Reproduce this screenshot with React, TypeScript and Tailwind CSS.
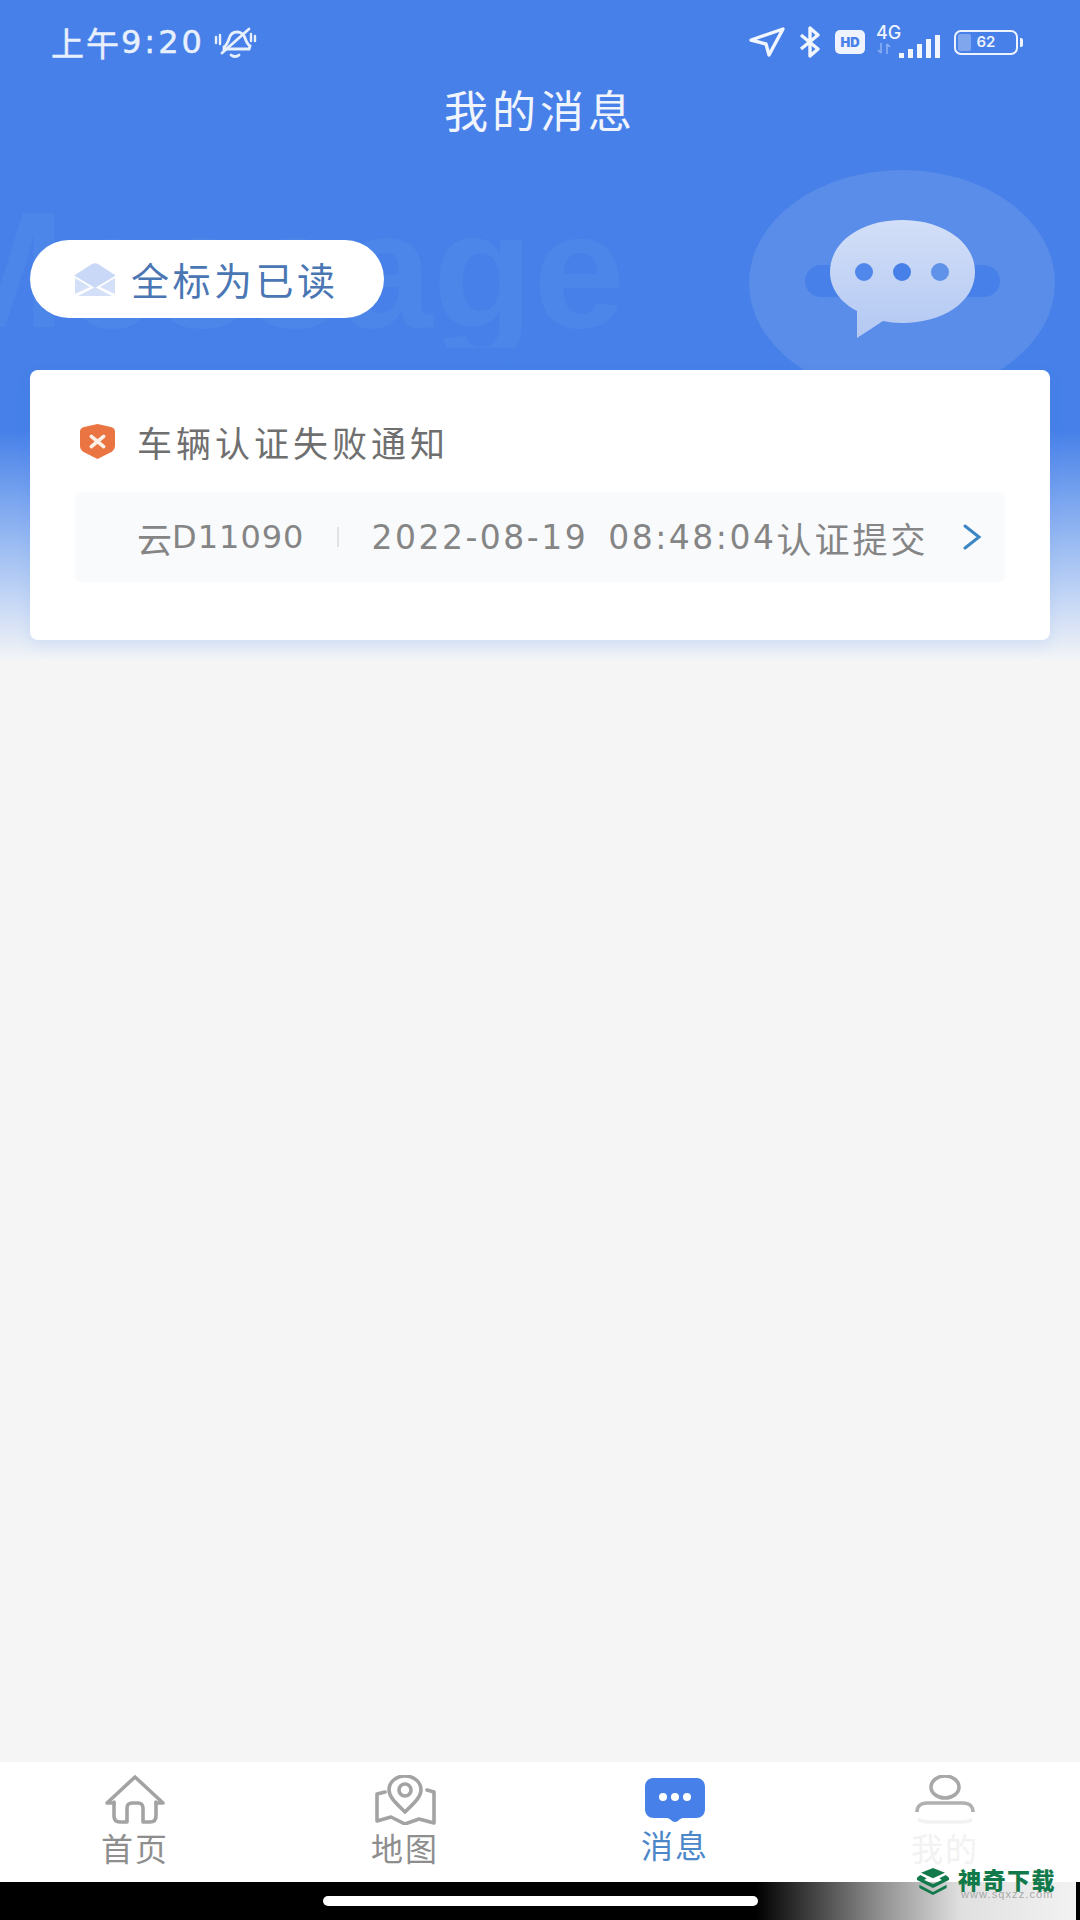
const cjk = "font-['Noto_Sans_CJK_SC','Noto_Sans',sans-serif]";
const latin = "font-['DejaVu_Sans','Noto_Sans_CJK_SC',sans-serif]";
const inter = "font-['Inter','Noto_Sans_CJK_SC',sans-serif]";

function MutedBell() {
  return (
    <svg width="44" height="32" viewBox="0 0 44 32" fill="none" stroke="#e8f0fd" strokeWidth="2.800" strokeLinecap="round">
      <path d="M11 21c3-2 4-5 5-8 1-4 4-7 8-7s7 3 8 6c1 3 2 6 5 8l-1 3H11z" />
      <path d="M9 27 36 3" />
      <path d="M18 29c2 2 6 2 8 0" fill="#e8f0fd" />
      <path d="M3 11v6M7 9v9M38 8v7M42 10v5" strokeWidth="2.400" />
    </svg>
  );
}

function StatusIcons() {
  return (
    <div className="flex items-center">
      <svg width="36" height="32" viewBox="0 0 36 32" fill="none" stroke="#f1f5fe" strokeWidth="3.400" strokeLinejoin="round">
        <path d="M2 14 34 3 20 29l-3-11z" />
      </svg>
      <svg className="ml-[13px]" width="24" height="32" viewBox="0 0 24 32" fill="none" stroke="#f1f5fe" strokeWidth="3.400" strokeLinejoin="round">
        <path d="M3 9 20 23l-8 7V2l8 7L3 23" />
      </svg>
      <div className={`ml-[13px] flex h-[24px] w-[30px] items-center justify-center rounded-[5px] bg-[#eef3fd] text-[13px] font-black leading-none text-[#4680e8] ${inter}`}>
        HD
      </div>
      <div className="relative ml-[11px] h-[30px] w-[64px]">
        <span className={`absolute left-0 top-[-4px] text-[18px] font-medium leading-[20px] text-[#eef3fd] ${inter}`}>4G</span>
        <svg className="absolute left-0 top-[15px]" width="16" height="13" viewBox="0 0 16 13" stroke="#8fb2f2" strokeWidth="1.500" fill="none">
          <path d="M5 1v10M2 8l3 3M11 12V2M14 5l-3-3" />
        </svg>
        <div className="absolute bottom-[-1px] right-0 flex items-end gap-[4px]">
          <div className="h-[5px] w-[5px] bg-[#f1f5fe]" />
          <div className="h-[9px] w-[5px] bg-[#f1f5fe]" />
          <div className="h-[14px] w-[5px] bg-[#f1f5fe]" />
          <div className="h-[19px] w-[5px] bg-[#f1f5fe]" />
          <div className="h-[23px] w-[5px] bg-[#f1f5fe]" />
        </div>
      </div>
      <div className="ml-[14px] flex items-center">
        <div className="relative flex h-[25px] w-[64px] items-center overflow-hidden rounded-[7px] border-[2.500px] border-[#eef3fd] p-[2px]">
          <div className="h-full w-[13px] rounded-[2px] bg-[#80a6ee]" />
          <span className={`absolute inset-0 text-center text-[15px] font-semibold leading-[20px] text-[#eef3fd] ${inter}`}>62</span>
        </div>
        <div className="ml-[2px] h-[9px] w-[3px] rounded-r-[2px] bg-[#eef3fd]" />
      </div>
    </div>
  );
}

function ChatDecor() {
  return (
    <div className="absolute left-[749px] top-[169px] h-[201px] w-[306px] overflow-hidden">
      <svg width="306" height="201" viewBox="0 0 306 201">
        <defs>
          <linearGradient id="bubble" x1="0" y1="0" x2="0" y2="1">
            <stop offset="0" stopColor="#d3dff8" />
            <stop offset="1" stopColor="#b3c8f2" />
          </linearGradient>
        </defs>
        <ellipse cx="153" cy="114" rx="153" ry="113" fill="#5a8de9" />
        <rect x="56" y="96" width="195" height="32" rx="16" fill="#4680e8" />
        <path d="M153 51c41 0 73 22 73 52 0 30-32 51-73 51-7 0-13-1-19-2l-26 17v-27c-17-9-27-23-27-39 0-30 31-52 72-52z" fill="url(#bubble)" />
        <circle cx="115" cy="103" r="9" fill="#4f88ea" />
        <circle cx="153" cy="103" r="9" fill="#4680e8" />
        <circle cx="191" cy="103" r="9" fill="#5f92e9" />
      </svg>
    </div>
  );
}

function Envelope() {
  return (
    <svg width="40" height="33" viewBox="0 0 40 33">
      <path d="M0 12 17 1c2-1 4-1 6 0l17 11v1L20 25 0 13z" fill="#c8d8f6" />
      <path d="M0 15l15 9L0 31zM40 15l-15 9 15 7zM3 33l17-9 17 9z" fill="#d3e0f8" />
    </svg>
  );
}

function ShieldX() {
  return (
    <svg width="35" height="35" viewBox="0 0 34 34">
      <path d="M17 0l13 3c2 .4 4 2 4 4v14c0 3-1 4-3 6L17 34 3 27c-2-2-3-3-3-6V7c0-2 2-3.600 4-4z" fill="#ea7543" />
      <path d="M11 12l12 10M23 12 11 22" stroke="#fdf0e8" strokeWidth="3.500" strokeLinecap="round" />
    </svg>
  );
}

function Tab(props: { label: string; color: string; children: React.ReactNode }) {
  return (
    <div className="flex w-[270px] flex-col items-center">
      <div className="flex h-[50px] items-center justify-center">{props.children}</div>
      <span className={`mt-[4px] text-[32px] leading-[36px] tracking-[2px] ${props.color} ${cjk}`}>{props.label}</span>
    </div>
  );
}

function BottomNav() {
  return (
    <div className="absolute bottom-[38px] left-0 flex h-[120px] w-full justify-center bg-white pt-[13px]">
      <Tab label="首页" color="text-[#8e8e8e]">
        <svg width="60" height="50" viewBox="0 0 60 50" fill="none" stroke="#a3a3a3" strokeWidth="3.600" strokeLinejoin="round" strokeLinecap="round">
          <path d="M9 28H2L30 2l28 26h-7" />
          <path d="M9 27v14c0 4 2 6 6 6h7V33c0-3 2-5 5-5h6c3 0 5 2 5 5v14h7c4 0 6-2 6-6V27" />
        </svg>
      </Tab>
      <Tab label="地图" color="text-[#8e8e8e]">
        <svg width="62" height="50" viewBox="0 0 62 50" fill="none" stroke="#a3a3a3" strokeWidth="3.600" strokeLinejoin="round" strokeLinecap="round">
          <path d="M31 37C22 28 15 22 15 15 15 7 22 1 31 1s16 6 16 14c0 7-7 13-16 22z" />
          <circle cx="31" cy="15" r="6" />
          <path d="M11 17 3 19v27l14-4 14 7 14-5 15 4V17l-7-2" />
        </svg>
      </Tab>
      <Tab label="消息" color="text-[#4c88c9] -translate-y-[3px]">
        <svg width="60" height="44" viewBox="0 0 60 44">
          <path d="M9 0h42c5 0 9 3 9 9v22c0 6-4 9-9 9H38c-3 0-5 4-8 4s-5-4-8-4H9c-5 0-9-3-9-9V9c0-6 4-9 9-9z" fill="#4680e8" />
          <circle cx="18" cy="19" r="4" fill="#fff" />
          <circle cx="30" cy="19" r="4" fill="#fff" />
          <circle cx="42" cy="19" r="4" fill="#fff" />
        </svg>
      </Tab>
      <Tab label="我的" color="text-[#f2f2f2]">
        <svg width="60" height="50" viewBox="0 0 60 50" fill="none" strokeWidth="3.600">
          <ellipse cx="30" cy="12" rx="14" ry="11" stroke="#a8a8a8" />
          <path d="M2 37c0-6 4-9 10-9h36c6 0 10 3 10 9" stroke="#b0b0b0" />
          <path d="M3 44c4 3 8 3 11 3h32c3 0 8 0 11-3" stroke="#f2f2f2" />
        </svg>
      </Tab>
    </div>
  );
}

function Watermark() {
  return (
    <div className="absolute bottom-0 right-0 h-[80px] w-[200px]">
      <svg className="absolute left-[37px] top-[27px]" width="32" height="29" viewBox="0 0 40 34">
        <path d="M20 0l15 6-15 7L5 6z" fill="#127a4a" />
        <path d="M4 9l8 4-3 2 11 5 11-5-3-2 8-4 6 5-22 11L-2 14z" fill="#127a4a" />
        <path d="M3 21l17 9 17-9v4L20 34 3 25z" fill="#127a4a" />
      </svg>
      <span className="absolute left-[78px] top-[24px] whitespace-nowrap text-[23px] font-black leading-[30px] tracking-[1.500px] text-[#127a4a] font-['Noto_Sans_CJK_SC',sans-serif]">神奇下载</span>
      <span className="absolute left-[81px] top-[49px] whitespace-nowrap text-[11px] leading-[11px] tracking-[1.100px] text-[#a8a8a8] font-['Liberation_Sans',sans-serif]">www.sqxzz.com</span>
    </div>
  );
}

export default function App() {
  return (
    <div className="relative h-[1920px] w-[1080px] overflow-hidden bg-[#f5f5f5]">
      <div className="absolute left-0 top-0 h-[662px] w-full bg-gradient-to-b from-[#4680e8] from-[65%] to-[#f4f5f6]" />
      <div className="absolute left-0 top-[188px] h-[160px] w-[640px] overflow-hidden">
        <span className="absolute left-[-72px] top-[-23px] whitespace-nowrap text-[165px] font-bold leading-[210px] text-[#4d86e9] font-['Liberation_Sans',sans-serif]">
          Message
        </span>
      </div>
      <ChatDecor />

      <div className="relative flex flex-col">
        <div className="flex h-[84px] items-center justify-between pl-[51px] pr-[57px]">
          <div className="flex items-center">
            <span className={`text-[33px] leading-none tracking-[2px] text-[#e8f0fd] [-webkit-text-stroke:0.5px_#e8f0fd] ${cjk}`}>上午</span>
            <span className={`text-[32px] leading-none tracking-[3px] text-[#e8f0fd] [-webkit-text-stroke:0.5px_#e8f0fd] ${latin}`}>9:20</span>
            <div className="ml-[8px]"><MutedBell /></div>
          </div>
          <StatusIcons />
        </div>
        <div className={`text-center text-[44px] leading-[50px] tracking-[4px] text-[#f0f4fd] ${cjk}`}>我的消息</div>

        <div className="ml-[30px] mt-[106px] flex h-[78px] w-[354px] items-center rounded-full bg-white pl-[45px]">
          <Envelope />
          <span className={`ml-[16px] whitespace-nowrap text-[38px] leading-none tracking-[3.500px] text-[#4a77b4] ${cjk}`}>全标为已读</span>
        </div>

        <div className="mx-[30px] mt-[52px] h-[270px] rounded-[8px] bg-white px-[45px] shadow-[0_6px_14px_rgba(70,128,232,0.1)]">
          <div className="flex h-[122px] items-center pt-[20px]">
            <div className="ml-[5px]"><ShieldX /></div>
            <span className={`ml-[22px] whitespace-nowrap text-[35px] leading-none tracking-[4px] text-[#6f6f6f] ${cjk}`}>车辆认证失败通知</span>
          </div>
          <div className="flex h-[90px] items-center rounded-[6px] bg-[#f9fafc] pl-[62px]">
            <span className={`text-[35px] leading-none text-[#858585] ${cjk}`}>云</span>
            <span className={`text-[32px] leading-none tracking-[1px] text-[#858585] ${latin}`}>D11090</span>
            <div className="ml-[33px] h-[20px] w-[2px] bg-[#e2e2e2]" />
            <span className={`ml-[32px] whitespace-nowrap text-[33px] leading-none tracking-[2.500px] [word-spacing:7px] text-[#858585] ${latin}`}>2022-08-19 08:48:04</span>
            <span className={`whitespace-nowrap text-[35px] leading-none tracking-[3px] text-[#858585] ${cjk}`}>认证提交</span>
            <svg className="ml-[35px]" width="19" height="26" viewBox="0 0 19 26" fill="none" stroke="#3b86c4" strokeWidth="3" strokeLinecap="round">
              <path d="M2 2l14 11L2 24" />
            </svg>
          </div>
        </div>
      </div>

      <BottomNav />
      <div className="absolute bottom-0 left-0 h-[38px] w-full bg-[linear-gradient(90deg,#000_70%,#909090_81.500%,#e0e0e0_89%,#f2f2f2_99.600%,#000_99.600%)]">
        <div className="absolute left-[323px] top-[14px] h-[10px] w-[435px] rounded-full bg-white" />
      </div>
      <Watermark />
    </div>
  );
}
